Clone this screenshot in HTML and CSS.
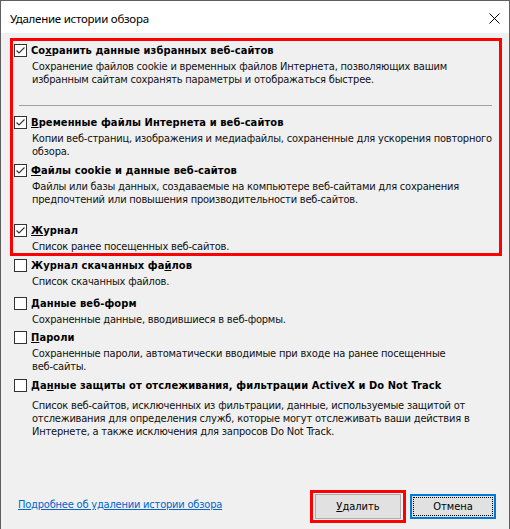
FILE: index.html
```html
<!DOCTYPE html>
<html lang="ru">
<head>
<meta charset="utf-8">
<title>Удаление истории обзора</title>
<link rel="stylesheet" href="styles.css">
</head>
<body>
<div class="window">
  <header class="titlebar">
    <span class="title">Удаление истории обзора</span>
    <svg class="close" width="11" height="11" viewBox="0 0 11 11"><path d="M0.5 0.5 L10.5 10.5 M10.5 0.5 L0.5 10.5" stroke="#000" stroke-width="1" fill="none"/></svg>
  </header>
  <main class="content">
    <section class="highlight">
      <div class="item">
        <div class="row"><span class="cb"><svg width="11" height="11" viewBox="0 0 11 11"><path d="M1.5 5.5 L4 8 L9.5 2.5" stroke="#333" stroke-width="1.1" fill="none"/></svg></span><span class="label">Со<u>х</u>ранить данные избранных веб-сайтов</span></div>
        <p class="desc">Сохранение файлов cookie и временных файлов Интернета, позволяющих вашим<br>избранным сайтам сохранять параметры и отображаться быстрее.</p>
      </div>
      <div class="sep"></div>
      <div class="item gap-10">
        <div class="row"><span class="cb"><svg width="11" height="11" viewBox="0 0 11 11"><path d="M1.5 5.5 L4 8 L9.5 2.5" stroke="#333" stroke-width="1.1" fill="none"/></svg></span><span class="label"><u>В</u>ременные файлы Интернета и веб-сайтов</span></div>
        <p class="desc">Копии веб-страниц, изображения и медиафайлы, сохраненные для ускорения повторного<br>обзора.</p>
      </div>
      <div class="item gap-6">
        <div class="row"><span class="cb"><svg width="11" height="11" viewBox="0 0 11 11"><path d="M1.5 5.5 L4 8 L9.5 2.5" stroke="#333" stroke-width="1.1" fill="none"/></svg></span><span class="label"><u>Ф</u>айлы cookie и данные веб-сайтов</span></div>
        <p class="desc">Файлы или базы данных, создаваемые на компьютере веб-сайтами для сохранения<br>предпочтений или повышения производительности веб-сайтов.</p>
      </div>
      <div class="item gap-18">
        <div class="row"><span class="cb"><svg width="11" height="11" viewBox="0 0 11 11"><path d="M1.5 5.5 L4 8 L9.5 2.5" stroke="#333" stroke-width="1.1" fill="none"/></svg></span><span class="label"><u>Ж</u>урнал</span></div>
        <p class="desc">Список ранее посещенных веб-сайтов.</p>
      </div>
    </section>
    <section class="plain">
      <div class="item gap-3">
        <div class="row"><span class="cb"></span><span class="label">Журнал скачанных фа<u>й</u>лов</span></div>
        <p class="desc">Список скачанных файлов.</p>
      </div>
      <div class="item gap-9">
        <div class="row"><span class="cb"></span><span class="label"><u>Д</u>анные веб-форм</span></div>
        <p class="desc">Сохраненные данные, вводившиеся в веб-формы.</p>
      </div>
      <div class="item gap-5">
        <div class="row"><span class="cb"></span><span class="label"><u>П</u>ароли</span></div>
        <p class="desc">Сохраненные пароли, автоматически вводимые при входе на ранее посещенные<br>веб-сайты.</p>
      </div>
      <div class="item gap-6">
        <div class="row"><span class="cb"></span><span class="label">Да<u>н</u>ные защиты от отслеживания, фильтрации ActiveX и Do Not Track</span></div>
        <p class="desc desc-wide">Список веб-сайтов, исключенных из фильтрации, данные, используемые защитой от<br>отслеживания для определения служб, которые могут отслеживать ваши действия в<br>Интернете, а также исключения для запросов Do Not Track.</p>
      </div>
    </section>
    <footer class="footer">
      <a class="link" href="#">Подробнее об удалении истории обзора</a>
      <div class="buttons">
        <span class="btn-wrap"><button class="btn" type="button"><u>У</u>далить</button></span>
        <button class="btn btn-default" type="button"><span class="focus">Отмена</span></button>
      </div>
    </footer>
  </main>
</div>
</body>
</html>
```
FILE: styles.css
```css
html, body {
  margin: 0;
  padding: 0;
}
body {
  width: 510px;
  height: 529px;
  overflow: hidden;
  background: #ffffff;
  font-family: "DejaVu Sans Condensed", "DejaVu Sans", sans-serif;
  font-size: 11px;
  color: #000;
}
.window {
  box-sizing: border-box;
  width: 510px;
  height: 529px;
  border: 1px solid #5f5f5f;
  border-bottom: none;
  display: flex;
  flex-direction: column;
  background: #f0f0f0;
}
.titlebar {
  flex: none;
  height: 32px;
  background: #ffffff;
  display: flex;
  align-items: center;
  justify-content: space-between;
  padding: 2px 9px 0 9px;
  box-sizing: border-box;
}
.title {
  font-family: "Noto Sans", "DejaVu Sans", sans-serif;
  font-size: 11.5px;
  letter-spacing: -0.25px;
  color: #000;
}
.close {
  display: block;
}
.content {
  flex: 1;
  display: flex;
  flex-direction: column;
  padding: 5px 7px 0 9px;
  min-height: 0;
}
.highlight {
  border: 3px solid #ff0000;
  padding: 3px 0 0 1px;
}
.plain {
  padding-left: 4px;
}
.item {
  display: flex;
  flex-direction: column;
}
.gap-3 { margin-top: 3px; }
.gap-5 { margin-top: 5px; }
.gap-6 { margin-top: 6px; }
.gap-9 { margin-top: 9px; }
.gap-10 { margin-top: 10px; }
.gap-18 { margin-top: 18px; }
.row {
  display: flex;
  align-items: center;
  gap: 4px;
  height: 13px;
}
.cb {
  flex: none;
  box-sizing: border-box;
  width: 13px;
  height: 13px;
  border: 1px solid #333333;
  background: #ffffff;
  display: flex;
}
.cb svg {
  display: block;
}
.label {
  font-weight: bold;
  line-height: 13px;
  white-space: nowrap;
  letter-spacing: 0.1px;
}
.label u, .btn u {
  text-decoration-thickness: 1px;
  text-underline-offset: 1px;
}
.desc {
  margin: 3px 0 0 18px;
  line-height: 13px;
  white-space: nowrap;
  letter-spacing: -0.2px;
  color: #111;
}
.desc-wide {
  margin-top: 7px;
}
.sep {
  height: 1px;
  background: #a0a0a0;
  margin: 19px 7px 0 5px;
}
.footer {
  margin-top: auto;
  display: flex;
  align-items: center;
  justify-content: space-between;
  padding: 0 6px 6px 8px;
}
.link {
  color: #0066cc;
  text-decoration: underline;
  letter-spacing: -0.2px;
  margin-bottom: 4px;
}
.buttons {
  display: flex;
  align-items: center;
  gap: 4px;
}
.btn-wrap {
  display: flex;
  border: 3px solid #ff0000;
  padding: 1px 2px;
}
.btn {
  box-sizing: border-box;
  width: 86px;
  height: 25px;
  padding: 0;
  margin: 0;
  background: #e1e1e1;
  border: 1px solid #adadad;
  font-family: "DejaVu Sans Condensed", "DejaVu Sans", sans-serif;
  font-size: 11px;
  color: #000;
}
.btn-default {
  border: 2px solid #0078d7;
  padding: 1px;
  display: flex;
}
.focus {
  flex: 1;
  display: flex;
  align-items: center;
  justify-content: center;
  border: 1px dotted #000;
}
```
